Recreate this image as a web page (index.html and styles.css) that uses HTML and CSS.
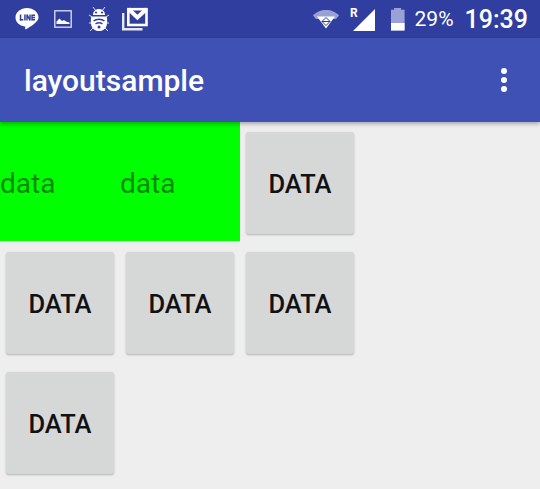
FILE: index.html
```html
<!DOCTYPE html>
<html lang="en">
<head>
    <meta charset="UTF-8">
    <title>layoutsample</title>
    <link rel="stylesheet" href="styles.css">
</head>
<body>
    <div class="status-bar">
        <div class="status-left">
            <svg class="icon-line" viewBox="0 0 24 24"><path d="M12 1C5.600 1 .5 5.300.5 10.400c0 4.600 4 8.200 9.300 9 .5.2.5.9.3 2.400 0 .6.4.7 1 .4 2.800-1.500 8-4.700 10.200-7.400 1.400-1.500 2.200-3 2.200-4.400C23.500 5.300 18.400 1 12 1z" fill="#fff"/><rect x="4.800" y="7.500" width="1.500" height="6" fill="#303f9f"/><rect x="4.800" y="12" width="3.500" height="1.500" fill="#303f9f"/><rect x="9.200" y="7.500" width="1.500" height="6" fill="#303f9f"/><path d="M12 13.500v-6l3 6v-6" stroke="#303f9f" stroke-width="1.400" fill="none"/><path d="M20 8.200h-3v4.600h3M17 10.500h3" stroke="#303f9f" stroke-width="1.400" fill="none"/></svg>
            <svg class="icon-image" viewBox="0 0 18 18"><rect x=".8" y=".8" width="16.400" height="16.400" fill="none" stroke="#dfe2f3" stroke-width="1.300"/><path d="M2.500 14v-2.500L5.500 8.500l2.500 2.500 2-1 2 1.500 3.500 1V14z" fill="#fff"/></svg>
            <svg class="icon-bug" viewBox="0 0 24 28"><path d="M6 2l3 4M18 2l-3 4M2 10l3 2M22 10l-3 2M2 18h3M22 18h-3M3 26l3-3M21 26l-3-3" stroke="#dfe2f3" stroke-width="1" fill="none"/><path d="M6 10c0-3.500 2.500-6 6-6s6 2.500 6 6z" fill="#fff"/><path d="M4.500 11.500h15c1 2 1 9-1 11.500-2 2.500-4.500 3-6.500 3s-4.500-.5-6.500-3c-2-2.500-2-9.500-1-11.500z" fill="#fff"/><circle cx="9" cy="7.500" r="1.100" fill="#303f9f"/><circle cx="15" cy="7.500" r="1.100" fill="#303f9f"/><path d="M6.500 16c3-2.500 8-2.500 11 0M8.500 19c2-1.500 5-1.500 7 0" stroke="#303f9f" stroke-width="1.500" fill="none"/><circle cx="12" cy="22" r="1.500" fill="#303f9f"/></svg>
            <svg class="icon-mail" viewBox="0 0 26 24"><path d="M1.200 6v16.300h19.300" stroke="#e6e8f5" stroke-width="2.400" fill="none"/><rect x="6.300" y="2.200" width="18.200" height="15.800" fill="none" stroke="#fff" stroke-width="2.600"/><path d="M6.500 2l8.900 8.500L24.500 2" fill="none" stroke="#fff" stroke-width="4"/></svg>
        </div>
        <div class="status-right">
            <svg class="icon-wifi" viewBox="0 0 26 20"><path d="M0 6.500C3 3 8 1 13 1s10 2 13 5.500l-3 3.500H3z" fill="#98a2d6"/><path d="M4 7.500h18L13 19.500z" fill="#fff"/><path d="M13 8.500l4 4-4 4-4-4zM9 12.500h8" stroke="#303f9f" stroke-width="1" fill="none"/></svg>
            <span class="roaming">R</span>
            <svg class="icon-signal" viewBox="0 0 22 22"><path d="M22 0v22H0z" fill="#fff"/></svg>
            <div class="battery"><div class="battery-level"></div></div>
            <span class="battery-text">29%</span>
            <span class="clock">19:39</span>
        </div>
    </div>

    <div class="app-bar">
        <span class="app-title">layoutsample</span>
        <div class="overflow-menu"><i></i><i></i><i></i></div>
    </div>

    <div class="grid">
        <div class="green-tile">
            <span class="tile-text">data</span>
            <span class="tile-text">data</span>
        </div>
        <div class="cell"><button class="data-btn">DATA</button></div>
        <div class="cell"><button class="data-btn">DATA</button></div>
        <div class="cell"><button class="data-btn">DATA</button></div>
        <div class="cell"><button class="data-btn">DATA</button></div>
        <div class="cell"><button class="data-btn">DATA</button></div>
    </div>
</body>
</html>
```

FILE: styles.css
```css
/* Page */
body {
    margin: 0;
    width: 540px;
    height: 489px;
    overflow: hidden;
    background-color: #eeeeee;
    font-family: Roboto, sans-serif;
}

/* Status bar */
.status-bar {
    height: 38px;
    background-color: #303f9f;
    display: flex;
    justify-content: space-between;
    align-items: center;
    color: #fff;
}

.status-left {
    display: flex;
    align-items: center;
    margin-left: 15px;
}

.status-right {
    display: flex;
    align-items: center;
    margin-right: 12px;
}

.icon-line {
    width: 24px;
    height: 24px;
    margin-right: 15px;
}

.icon-image {
    width: 18px;
    height: 18px;
    margin-right: 15px;
}

.icon-bug {
    width: 24px;
    height: 28px;
    margin-right: 11px;
}

.icon-mail {
    width: 26px;
    height: 24px;
}

.icon-wifi {
    width: 26px;
    height: 20px;
}

.roaming {
    font-size: 12px;
    font-weight: 700;
    margin: -12px -5px 0 11px;
}

.icon-signal {
    width: 22px;
    height: 22px;
    margin-top: 1px;
}

.battery {
    width: 14px;
    height: 23px;
    margin-left: 16px;
    background-color: #98a2d6;
    display: flex;
    align-items: flex-end;
    clip-path: polygon(25% 0, 75% 0, 75% 10%, 100% 10%, 100% 100%, 0 100%, 0 10%, 25% 10%);
}

.battery-level {
    width: 100%;
    height: 8px;
    background-color: #fff;
}

.battery-text {
    font-size: 21px;
    margin-left: 10px;
}

.clock {
    font-size: 25px;
    font-weight: 500;
    margin-left: 11px;
}

/* App bar */
.app-bar {
    height: 84px;
    background-color: #3f51b5;
    display: flex;
    justify-content: space-between;
    align-items: center;
    padding: 0 33px 0 24px;
    box-shadow: 0 2px 4px rgba(0, 0, 0, 0.3);
    position: relative;
    color: #fff;
}

.app-title {
    font-size: 30px;
    font-weight: 500;
}

.overflow-menu {
    display: flex;
    flex-direction: column;
    gap: 3px;
}

.overflow-menu i {
    width: 6px;
    height: 6px;
    border-radius: 50%;
    background-color: #fff;
}

/* Grid */
.grid {
    display: grid;
    grid-template-columns: repeat(3, 120px);
    grid-auto-rows: 120px;
}

.green-tile {
    grid-column: span 2;
    height: 115px;
    padding-top: 4px;
    background-color: #00ff00;
    display: flex;
    align-items: center;
}

.tile-text {
    width: 120px;
    font-size: 28px;
    color: #0a8a0a;
}

.cell {
    padding: 10px 6px 6px;
}

.data-btn {
    width: 108px;
    height: 102px;
    padding: 2px 0 0;
    border: none;
    border-radius: 3px;
    background-color: #d6d7d7;
    box-shadow: 0 1px 2px rgba(0, 0, 0, 0.25);
    font-family: Roboto, sans-serif;
    font-size: 25.500px;
    font-weight: 500;
    color: #111;
}
```
